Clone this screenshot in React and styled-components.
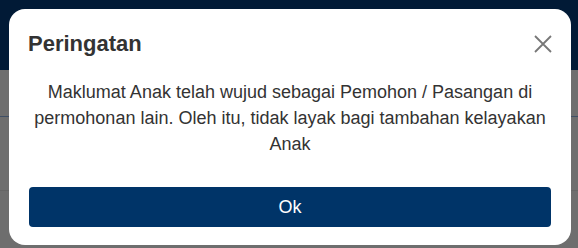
import React from 'react'
import styled, { createGlobalStyle } from 'styled-components'

const GlobalStyle = createGlobalStyle`
  html, body {
    margin: 0;
    padding: 0;
    height: 100%;
    overflow: hidden;
    font-family: "Liberation Sans", Arial, Helvetica, sans-serif;
  }
`

const Page = styled.div`
  width: 578px;
  height: 248px;
  display: flex;
  flex-direction: column;
  background: #6e6e6e;
`

const TopBar = styled.div`
  height: 70px;
  background: #011a36;
`

const DimRow = styled.div`
  height: ${(p) => p.h}px;
  border-bottom: 1px solid ${(p) => p.line};
`

const Backdrop = styled.div`
  position: fixed;
  inset: 0;
`

const Modal = styled.div`
  position: absolute;
  top: 9px;
  left: 9px;
  width: 562px;
  height: 236px;
  box-sizing: border-box;
  background: #fff;
  border-radius: 16px;
  padding: 21px 20px 0 20px;
  display: flex;
  flex-direction: column;
`

const Header = styled.div`
  display: flex;
  align-items: center;
  justify-content: space-between;
  height: 27px;
`

const Title = styled.h2`
  margin: 0 0 0 -1px;
  font-size: 22px;
  line-height: 27px;
  font-weight: 700;
  color: #333;
`

const CloseButton = styled.button`
  border: none;
  background: none;
  padding: 0;
  width: 20px;
  height: 20px;
  display: flex;
  align-items: center;
  justify-content: center;
  margin-right: -2px;
  cursor: pointer;
`

const Body = styled.p`
  margin: 22px 0 0 0;
  text-align: center;
  font-size: 18px;
  line-height: 26px;
  color: #333;
`

const OkButton = styled.button`
  margin-top: 30px;
  height: 40px;
  width: 100%;
  border: none;
  border-radius: 4px;
  background: #003468;
  color: #fff;
  font-family: inherit;
  font-size: 18px;
  cursor: pointer;
`

export default function App() {
  return (
    <>
      <GlobalStyle />
      <Page>
        <TopBar />
        <DimRow h={46} line="#3f4f66" />
        <DimRow h={73} line="#666" />
      </Page>
      <Backdrop>
        <Modal role="dialog">
          <Header>
            <Title>Peringatan</Title>
            <CloseButton aria-label="Tutup">
              <svg width="18" height="18" viewBox="0 0 18 18">
                <path d="M1 1 L17 17 M17 1 L1 17" stroke="#777" strokeWidth="1.8" fill="none" />
              </svg>
            </CloseButton>
          </Header>
          <Body>
            Maklumat Anak telah wujud sebagai Pemohon / Pasangan di permohonan lain. Oleh itu, tidak layak bagi tambahan kelayakan Anak
          </Body>
          <OkButton>Ok</OkButton>
        </Modal>
      </Backdrop>
    </>
  )
}
